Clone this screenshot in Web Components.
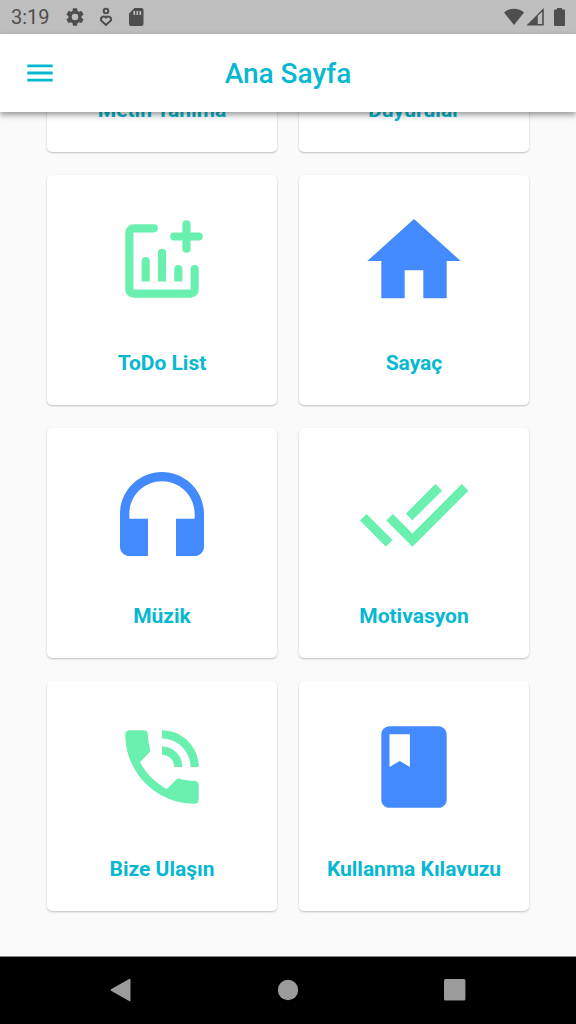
<!DOCTYPE html>
<html lang="tr">
<head>
<meta charset="utf-8">
<meta name="viewport" content="width=device-width, initial-scale=1">
<title>Ana Sayfa</title>
<style>
  html, body { height: 100%; }
  body { margin: 0; background: #fafafa; font-family: Roboto, "Noto Sans", sans-serif; --accent: #06b8d0; }
</style>
</head>
<body>
<app-screen>
  <status-bar slot="status" time="3:19"></status-bar>
  <app-header slot="header">Ana Sayfa</app-header>
  <menu-card icon="text" tone="green">Metin Tanıma</menu-card>
  <menu-card icon="bell" tone="blue">Duyurular</menu-card>
  <menu-card icon="chart" tone="green">ToDo List</menu-card>
  <menu-card icon="home" tone="blue" large>Sayaç</menu-card>
  <menu-card icon="headphones" tone="blue" large>Müzik</menu-card>
  <menu-card icon="checks" tone="green" large>Motivasyon</menu-card>
  <menu-card icon="phone" tone="green">Bize Ulaşın</menu-card>
  <menu-card icon="book" tone="blue">Kullanma Kılavuzu</menu-card>
  <system-nav slot="nav"></system-nav>
</app-screen>

<script>
const ICONS = {
  text: 'M2.5 4v3h5v12h3V7h5V4h-13zm19 5h-9v3h3v7h3v-7h3V9z',
  bell: 'M12 22c1.1 0 2-.9 2-2h-4c0 1.1.9 2 2 2zm6-6v-5c0-3.07-1.63-5.64-4.5-6.32V4a1.5 1.5 0 0 0-3 0v.68C7.64 5.36 6 7.92 6 11v5l-2 2v1h16v-1l-2-2z',
  chart: 'M5 3h5a1 1 0 0 1 0 2H5v14h14v-5a1 1 0 0 1 2 0v5a2 2 0 0 1-2 2H5a2 2 0 0 1-2-2V5a2 2 0 0 1 2-2zM7 17v-5a1 1 0 0 1 2 0v5zM11 17v-7a1 1 0 0 1 2 0v7zM15 17v-3a1 1 0 0 1 2 0v3zM17 5V3a1 1 0 0 1 2 0v2h2a1 1 0 0 1 0 2h-2v2a1 1 0 0 1-2 0V7h-2a1 1 0 0 1 0-2z',
  home: 'M10 20v-6h4v6h5v-8h3L12 3 2 12h3v8z',
  headphones: 'M12 3c-4.97 0-9 4.03-9 9v7c0 1.1.9 2 2 2h4v-8H5v-1c0-3.87 3.13-7 7-7s7 3.13 7 7v1h-4v8h4c1.1 0 2-.9 2-2v-7c0-4.97-4.03-9-9-9z',
  checks: 'M18 7l-1.41-1.41-6.34 6.34 1.41 1.41L18 7zm4.24-1.41L11.66 16.17 7.48 12l-1.41 1.41L11.66 19l12-12-1.42-1.41zM.41 13.41L6 19l1.41-1.41L1.83 12 .41 13.41z',
  phone: 'M4 3h3.6c.5 0 .9.4.92.9.05 1.3.25 2.5.55 3.7.1.35.05.65-.2.9L6.62 10.79c1.44 2.84 3.76 5.15 6.59 6.59l2.3-2.3c.22-.22.5-.28.85-.2 1.2.32 2.4.5 3.7.57.55.03.94.4.94.95V20c0 .55-.45 1-1 1C10.61 21 3 13.39 3 4c0-.55.45-1 1-1zM19 12h2c0-4.97-4.03-9-9-9v2c3.87 0 7 3.13 7 7zm-4 0h2c0-2.76-2.24-5-5-5v2c1.66 0 3 1.34 3 3z',
  book: 'M18 2H6c-1.1 0-2 .9-2 2v16c0 1.1.9 2 2 2h12c1.1 0 2-.9 2-2V4c0-1.1-.9-2-2-2zM6 4h5v8l-2.5-1.5L6 12V4z'
};

class AppScreen extends HTMLElement {
  constructor() {
    super();
    this.attachShadow({ mode: 'open' }).innerHTML = `
      <style>
        :host { display: flex; flex-direction: column; height: 100vh; }
        slot[name] { display: block; flex: none; }
        /* a reversed column opens scrolled to its end */
        main { flex: 1; min-height: 0; overflow-y: auto; scrollbar-width: none;
               display: flex; flex-direction: column-reverse; }
        .grid { flex: none; display: grid; grid-template-columns: 1fr 1fr;
                gap: 23px 22px; padding: 45px 47px; }
      </style>
      <slot name="status"></slot>
      <slot name="header"></slot>
      <main><div class="grid"><slot></slot></div></main>
      <slot name="nav"></slot>`;
  }
}

class StatusBar extends HTMLElement {
  connectedCallback() {
    this.attachShadow({ mode: 'open' }).innerHTML = `
      <style>
        :host { display: flex; align-items: center; justify-content: space-between;
                height: 34px; padding: 0 10px 0 11px; background: #bebebe; color: #4e4e4e; }
        div { display: flex; align-items: center; }
        time { font-size: 20px; line-height: 24px; margin-right: 15px; }
        svg { display: block; fill: currentColor; }
        .left svg + svg { margin-left: 12px; }
      </style>
      <div class="left">
        <time>${this.getAttribute('time')}</time>
        <svg width="20" height="20" viewBox="1 1 22 22"><path d="M19.14 12.94c.04-.3.06-.61.06-.94 0-.32-.02-.64-.07-.94l2.03-1.58c.18-.14.23-.41.12-.61l-1.92-3.32c-.12-.22-.37-.29-.59-.22l-2.39.96c-.5-.38-1.03-.7-1.62-.94l-.36-2.54c-.04-.24-.24-.41-.48-.41h-3.84c-.24 0-.43.17-.47.41l-.36 2.54c-.59.24-1.13.57-1.62.94l-2.39-.96c-.22-.08-.47 0-.59.22L2.74 8.87c-.12.21-.08.47.12.61l2.03 1.58c-.05.3-.09.63-.09.94s.02.64.07.94l-2.03 1.58c-.18.14-.23.41-.12.61l1.92 3.32c.12.22.37.29.59.22l2.39-.96c.5.38 1.03.7 1.62.94l.36 2.54c.05.24.24.41.48.41h3.84c.24 0 .44-.17.47-.41l.36-2.54c.59-.24 1.13-.56 1.62-.94l2.39.96c.22.08.47 0 .59-.22l1.92-3.32c.12-.22.07-.47-.12-.61l-2.01-1.58zM12 15.6A3.6 3.6 0 1 1 12 8.4a3.6 3.6 0 0 1 0 7.2z"/></svg>
        <svg width="18" height="20" viewBox="0 0 18 20"><g fill="none" stroke="currentColor" stroke-width="2"><circle cx="9" cy="4" r="2.3"/><path d="M9 18L4.100 13.400a2.900 2.900 0 0 1 4.900-2.900a2.900 2.900 0 0 1 4.900 2.900z"/></g></svg>
        <svg width="20" height="20" viewBox="1 0 20 20"><path fill-rule="evenodd" d="M8.500 1H15.500a2 2 0 0 1 2 2V17a2 2 0 0 1-2 2H5a2 2 0 0 1-2-2V6.500zM7.500 4V8h1.600V4zM10.500 4V8h1.600V4zM13.500 4V8h1.600V4z"/></svg>
      </div>
      <div>
        <svg width="20" height="18" viewBox="0 0 20 18"><path d="M0 4.500C5.500-.5 14.500-.5 20 4.500L10 17z"/></svg>
        <svg width="22" height="18" viewBox="0 0 22 18"><path fill-rule="evenodd" d="M2.500 17.500L19.800 0V17.500zM13.800 7.800V16H18.200V3.800z"/></svg>
        <svg width="20" height="20" viewBox="4 0 20 20"><path d="M15 1h5v1.500h2a1 1 0 0 1 1 1V18a1 1 0 0 1-1 1H13a1 1 0 0 1-1-1V3.500a1 1 0 0 1 1-1h2z"/></svg>
      </div>`;
  }
}

class AppHeader extends HTMLElement {
  constructor() {
    super();
    this.attachShadow({ mode: 'open' }).innerHTML = `
      <style>
        :host { position: relative; z-index: 1; display: grid; align-items: center;
                grid-template-columns: 34px 1fr 34px; height: 78px; padding: 0 23px;
                background: #fff; color: var(--accent); box-shadow: 0 3px 6px rgba(0,0,0,.4); }
        button { padding: 0; border: 0; background: none; color: inherit; }
        svg { display: block; fill: currentColor; }
        h1 { margin: 0; padding-top: 2px; text-align: center; font-size: 28px; line-height: 36px; font-weight: 500; }
      </style>
      <button type="button" aria-label="Menü"><svg width="34" height="34" viewBox="0 0 24 24"><path d="M3 18h18v-2H3v2zm0-5h18v-2H3v2zm0-7v2h18V6H3z"/></svg></button>
      <h1><slot></slot></h1>`;
  }
}

class MenuCard extends HTMLElement {
  connectedCallback() {
    const size = this.hasAttribute('large') ? 112 : 98;
    const color = this.getAttribute('tone') === 'blue' ? '#448aff' : '#69f0ae';
    this.attachShadow({ mode: 'open' }).innerHTML = `
      <style>
        :host { display: block; aspect-ratio: 1; }
        a { box-sizing: border-box; height: 100%; display: flex; flex-direction: column;
            align-items: center; justify-content: center; gap: 34px; border-radius: 5px;
            background: #fff; color: var(--accent); text-decoration: none;
            box-shadow: 0 1px 2px rgba(0,0,0,.24); }
        .icon { display: grid; place-items: center; height: 112px; }
        svg { display: block; fill: ${color}; }
        .label { font-size: 21px; line-height: 24px; font-weight: 700; white-space: nowrap; }
      </style>
      <a href="#${this.getAttribute('icon')}">
        <span class="icon"><svg width="${size}" height="${size}" viewBox="0 0 24 24" aria-hidden="true"><path d="${ICONS[this.getAttribute('icon')]}"/></svg></span>
        <span class="label"><slot></slot></span>
      </a>`;
  }
}

class SystemNav extends HTMLElement {
  constructor() {
    super();
    this.attachShadow({ mode: 'open' }).innerHTML = `
      <style>
        :host { display: flex; justify-content: space-evenly; align-items: center;
                box-sizing: border-box; height: 68px; padding-bottom: 1px; background: #000; border-top: 1px solid #888; }
        button { display: grid; place-items: center; width: 90px; height: 48px;
                 padding: 0; border: 0; background: none; color: #9b9b9b; }
        svg { display: block; fill: currentColor; }
      </style>
      <button type="button" aria-label="Geri"><svg width="24" height="24" viewBox="0 0 24 24"><path d="M1 11.200L19.500 .8q1-.5 1 .6V22.600q0 1.100-1 .6L1 12.800q-1-.8 0-1.600z"/></svg></button>
      <button type="button" aria-label="Ana ekran"><svg width="24" height="24" viewBox="0 0 24 24"><circle cx="12" cy="12" r="10.200"/></svg></button>
      <button type="button" aria-label="Son uygulamalar"><svg width="24" height="24" viewBox="0 0 24 24"><rect x="1" y="1" width="21.400" height="21.400" rx="1.500"/></svg></button>`;
  }
}

customElements.define('app-screen', AppScreen);
customElements.define('status-bar', StatusBar);
customElements.define('app-header', AppHeader);
customElements.define('menu-card', MenuCard);
customElements.define('system-nav', SystemNav);
</script>
</body>
</html>
